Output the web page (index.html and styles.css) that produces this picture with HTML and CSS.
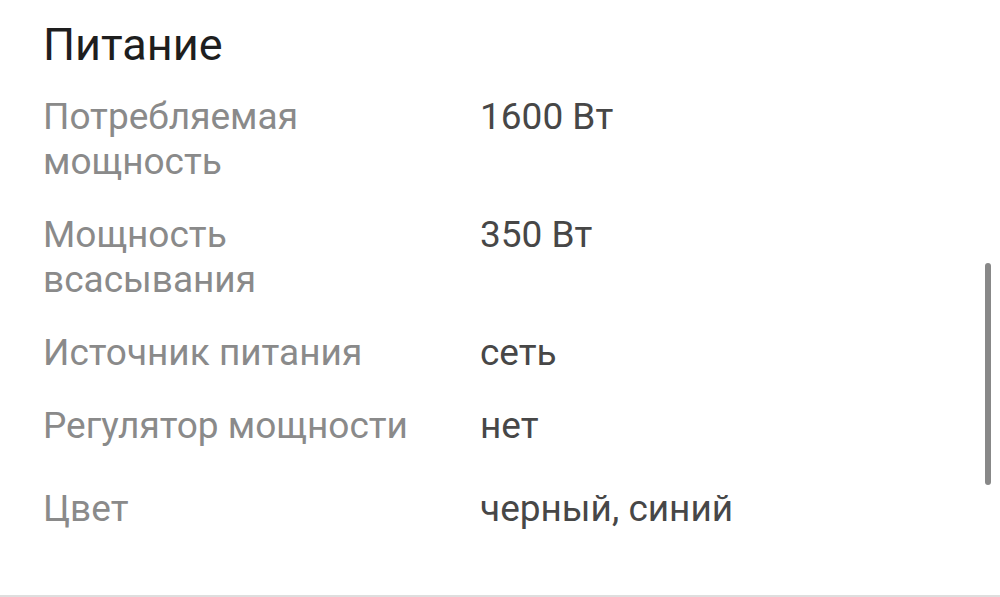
FILE: index.html
```html
<!DOCTYPE html>
<html>
  <head>
    <title>Питание</title>
    <link rel="stylesheet" href="styles.css">
  </head>
  <body>
    <div class="screen">
      <h2 class="section-title">Питание</h2>

      <div class="specs">
        <div class="spec-row">
          <div class="spec-label">Потребляемая мощность</div>
          <div class="spec-value">1600 Вт</div>
        </div>
        <div class="spec-row">
          <div class="spec-label">Мощность всасывания</div>
          <div class="spec-value">350 Вт</div>
        </div>
        <div class="spec-row">
          <div class="spec-label">Источник питания</div>
          <div class="spec-value">сеть</div>
        </div>
        <div class="spec-row">
          <div class="spec-label">Регулятор мощности</div>
          <div class="spec-value">нет</div>
        </div>
        <div class="spec-row spec-row-last">
          <div class="spec-label">Цвет</div>
          <div class="spec-value">черный, синий</div>
        </div>
      </div>

      <div class="scroll-thumb"></div>
    </div>
  </body>
</html>
```

FILE: styles.css
```css
html, body {
  margin: 0;
  padding: 0;
  background: #fff;
}

.screen {
  position: relative;
  height: 595px;
  border-bottom: 2px solid #dedede;
  padding-left: 43px;
  font-family: Roboto, 'Noto Sans', sans-serif;
  overflow: hidden;
}

.section-title {
  margin: 20px 0 0 0;
  font-size: 45px;
  font-weight: 400;
  line-height: 50px;
  color: #1e1e1e;
}

.specs {
  margin-top: 10px;
}

.spec-row {
  display: grid;
  grid-template-columns: 437px 1fr;
  padding: 14px 0;
  font-size: 37px;
  line-height: 45px;
}

.spec-row-last {
  margin-top: 10px;
}

.spec-label {
  padding-right: 40px;
  color: #8a8a8a;
}

.spec-value {
  color: #474747;
}

/* overlay scrollbar */
.scroll-thumb {
  position: absolute;
  left: 985px;
  top: 263px;
  width: 6px;
  height: 222px;
  border-radius: 3px;
  background: #888;
}
```
